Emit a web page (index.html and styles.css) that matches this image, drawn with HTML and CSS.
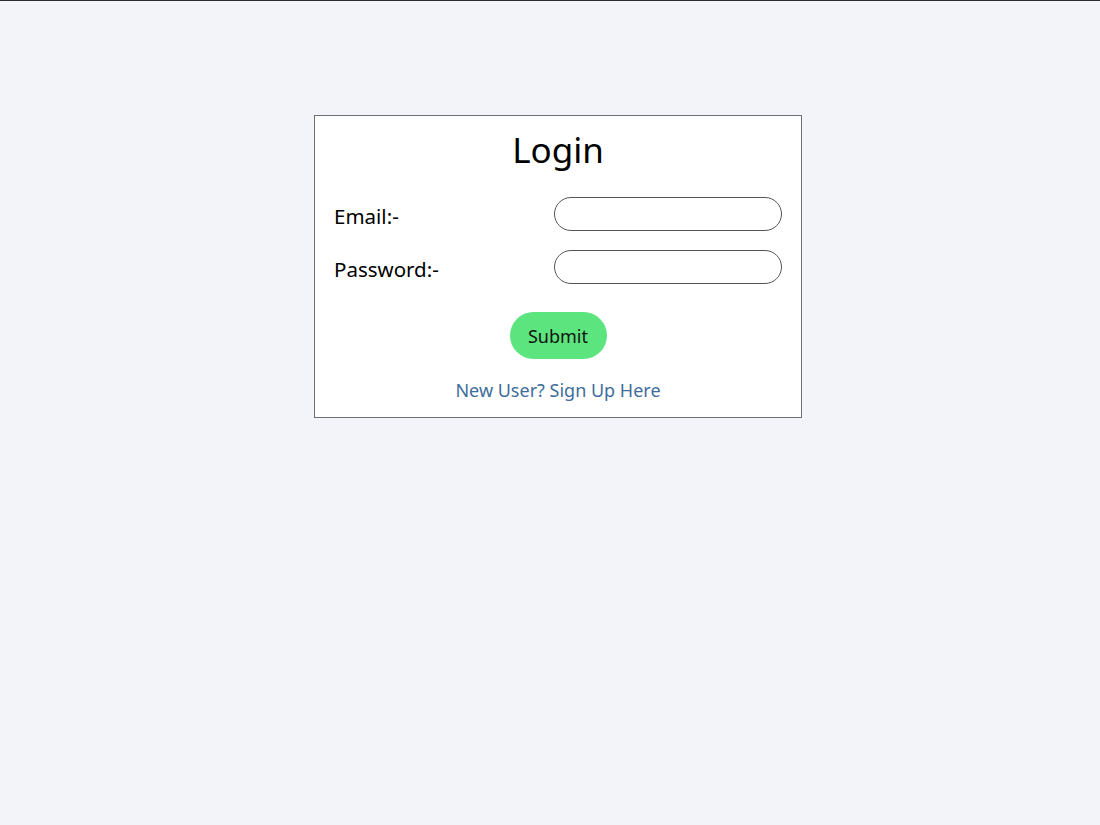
FILE: index.html
```html
<!DOCTYPE html>
<html>
<head>
<meta charset="utf-8">
<link rel="stylesheet" href="styles.css">
</head>
<body>
<div class="topline"></div>
<div class="page">
  <form class="card">
    <h1 class="title">Login</h1>
    <div class="row">
      <label class="label">Email:-</label>
      <input class="field" type="text">
    </div>
    <div class="row">
      <label class="label">Password:-</label>
      <input class="field" type="password">
    </div>
    <div class="actions">
      <button class="submit" type="button">Submit</button>
    </div>
    <div class="signup"><a class="signup-link" href="#">New User? Sign Up Here</a></div>
  </form>
</div>
</body>
</html>
```
FILE: styles.css
```css
html, body {
  margin: 0;
  padding: 0;
  background: #f3f3fa;
  font-family: "Noto Sans", "Open Sans", sans-serif;
}
.topline {
  height: 1px;
  background: #2b2a33;
}
.page {
  padding: 114px 0 0 16px;
  display: flex;
  justify-content: center;
}
.card {
  width: 448px;
  background: #ffffff;
  border: 1px solid #6e6e78;
  padding: 8px 19px 15px 19px;
  display: flex;
  flex-direction: column;
}
.title {
  margin: 0;
  text-align: center;
  font-weight: 400;
  font-size: 35px;
  line-height: 52px;
  color: #000;
}
.row {
  display: flex;
  justify-content: space-between;
  align-items: center;
  margin-top: 21px;
}
.row + .row {
  margin-top: 19px;
}
.label {
  font-size: 20.5px;
  color: #000;
  padding-top: 3px;
}
.field {
  width: 228px;
  height: 34px;
  box-sizing: border-box;
  border: 1px solid #555;
  border-radius: 17px;
  background: #fff;
  padding: 0 12px;
  margin: 0;
}
.actions {
  display: flex;
  justify-content: center;
  margin-top: 28px;
}
.submit {
  width: 97px;
  height: 47px;
  border: none;
  border-radius: 24px;
  background: #5ce57e;
  font-family: "Noto Sans", "Open Sans", sans-serif;
  font-size: 18px;
  color: #111;
  padding: 0;
}
.signup {
  text-align: center;
  margin-top: 19px;
}
.signup-link {
  font-size: 18px;
  color: #3e6d99;
  text-decoration: none;
}
```
